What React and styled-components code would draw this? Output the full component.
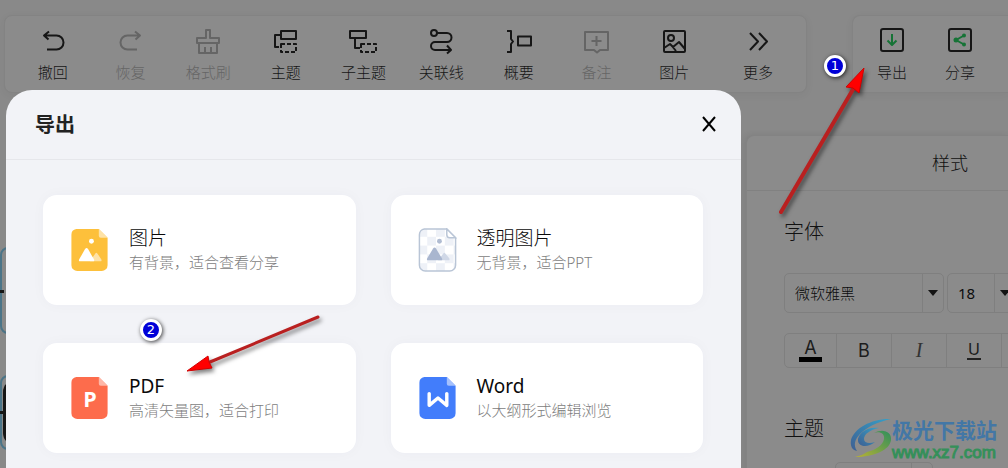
import React, { useState } from "react";
import styled, { createGlobalStyle } from "styled-components";

const GlobalStyle = createGlobalStyle`
  * {
    box-sizing: border-box;
  }

  body {
    margin: 0;
    background: #898989;
    font-family: "Noto Sans", "Noto Sans CJK SC", sans-serif;
  }

  button,
  select {
    font-family: inherit;
  }
`;

const Page = styled.div`
  position: relative;
  height: 100vh;
  overflow: hidden;
  color: #111;
`;

const TopBar = styled.header`
  display: flex;
  gap: 45px;
  padding: 15px 0 0 4px;
`;

const Toolbar = styled.nav`
  flex: 1;
  display: grid;
  grid-template-columns: repeat(9, 1fr) 90px;
  height: 78px;
  padding: 0 3px 0 9px;
  background: #8b8b8b;
  border: 1px solid #838383;
  border-radius: 8px;
  box-shadow: 0 2px 10px rgba(0, 0, 0, 0.04);
`;

const ActionBar = styled.nav`
  display: grid;
  grid-template-columns: 68px 68px;
  width: 156px;
  height: 78px;
  padding-left: 5px;
  background: #8b8b8b;
  border: 1px solid #838383;
  border-right: none;
  border-radius: 8px 0 0 8px;
  box-shadow: 0 2px 10px rgba(0, 0, 0, 0.04);
`;

const ToolButton = styled.button`
  display: flex;
  flex-direction: column;
  align-items: center;
  gap: 6px;
  padding: 11px 0 0;
  background: none;
  border: none;
  color: #161616;
  cursor: pointer;

  &:disabled {
    color: #656565;
    cursor: default;
  }
`;

const ToolLabel = styled.span`
  font-size: 15px;
  font-weight: 300;
  line-height: 22px;
  white-space: nowrap;
`;

const Icon = styled.svg`
  display: block;
  width: 28px;
  height: 28px;
  fill: none;
  stroke: currentColor;
  stroke-width: 2;
  stroke-linejoin: round;
`;

const StylePanel = styled.aside`
  width: 262px;
  margin: 42px 0 0 auto;
  background: #8b8b8b;
  border: 1px solid #838383;
  border-right: none;
  border-radius: 8px 0 0 0;
  box-shadow: -2px 0 6px rgba(0, 0, 0, 0.08);
`;

const PanelHeader = styled.div`
  height: 55px;
  padding-left: 185px;
  border-bottom: 1px solid #818181;
  font-size: 18px;
  font-weight: 300;
  line-height: 54px;
`;

const PanelBody = styled.div`
  padding: 28px 0 0 37px;
`;

const SectionTitle = styled.h3`
  margin: 0;
  font-size: 20px;
  font-weight: 300;
  line-height: 26px;
`;

const FieldRow = styled.div`
  display: flex;
  gap: 3px;
  margin-top: 28px;
`;

const SelectBox = styled.label`
  position: relative;
  flex: 0 0 ${(props) => props.$width};
  height: 40px;
  border: 1px solid #7f7f7f;
  border-radius: 5px;

  &::before {
    content: "";
    position: absolute;
    top: 0;
    bottom: 0;
    right: 20px;
    border-left: 1px solid #7f7f7f;
  }

  &::after {
    content: "";
    position: absolute;
    top: 16px;
    right: 5px;
    border: 5px solid transparent;
    border-top: 6px solid #141414;
    border-bottom: none;
  }
`;

const Select = styled.select`
  width: 100%;
  height: 100%;
  padding: 0 22px 0 10px;
  appearance: none;
  background: none;
  border: none;
  color: #0c0c0c;
  font-size: 15px;
  font-weight: ${(props) => props.$weight || 300};
`;

const FormatGroup = styled.div`
  display: grid;
  grid-template-columns: 52px repeat(4, 55px);
  width: 272px;
  height: 35px;
  margin: 20px 0 48px;
  border: 1px solid #7f7f7f;
  border-radius: 5px;
`;

const FormatButton = styled.button`
  display: flex;
  align-items: center;
  justify-content: center;
  padding: 0;
  background: none;
  border: none;
  border-right: 1px solid #7f7f7f;
  color: #1c1c1c;
  font-family: "Inter", sans-serif;
  font-size: 18px;
  font-weight: 400;
`;

const ItalicButton = styled(FormatButton)`
  color: #333;
  font-family: "Liberation Serif", serif;
  font-size: 20px;
  font-style: italic;
`;

const ColorLetter = styled.span`
  width: 23px;
  border-bottom: 5px solid #000;
  font-size: 18px;
  line-height: 18px;
`;

const UnderlineLetter = styled.span`
  width: 14px;
  border-bottom: 2px solid #222;
  font-size: 16px;
  line-height: 17px;
`;

const ThemeRow = styled.div`
  display: flex;
  margin: 20px 0 0 51px;
`;

const MapNode = styled.div`
  position: absolute;
  top: ${(props) => props.$top};
  left: 0;
  width: 60px;
  height: ${(props) => props.$height};
  padding: 3px 0 3px 1px;
  border: 2px solid #4b7488;
  border-radius: 8px;
`;

const NodeBody = styled.div`
  height: 100%;
  background: #161616;
  border-radius: 12px;
`;

const Connector = styled.div`
  position: absolute;
  top: ${(props) => props.$top};
  left: 0;
  width: 4px;
  height: 3px;
  background: #161616;
`;

const Dialog = styled.section`
  position: absolute;
  top: 90px;
  bottom: -40px;
  left: 6px;
  right: 267px;
  background: #f2f3f7;
  border-radius: 26px 26px 0 0;
`;

const DialogHeader = styled.div`
  display: flex;
  align-items: center;
  justify-content: space-between;
  height: 70px;
  padding: 0 24px 0 29px;
  border-bottom: 1px solid #e6e7eb;
`;

const DialogTitle = styled.h2`
  margin: 0;
  font-size: 20px;
  font-weight: 700;
  line-height: 28px;
  color: #222;
`;

const CloseButton = styled.button`
  padding: 0;
  background: none;
  border: none;
  color: #000;
  cursor: pointer;

  svg {
    display: block;
  }
`;

const CardGrid = styled.div`
  display: grid;
  grid-template-columns: 1fr 1fr;
  gap: 38px 35px;
  padding: 35px 38px 38px 37px;
`;

const Card = styled.button`
  display: flex;
  align-items: center;
  gap: 20px;
  height: 110px;
  padding: 0 27px;
  background: #fff;
  border: none;
  border-radius: 14px;
  box-shadow: 0 0 14px rgba(40, 50, 80, 0.03);
  text-align: left;
  cursor: pointer;
`;

const FileIcon = styled.svg`
  flex: none;
  width: 39px;
  height: 44px;
`;

const CardText = styled.span`
  display: flex;
  flex-direction: column;
  padding-bottom: 3px;
`;

const CardTitle = styled.span`
  font-size: 19px;
  font-weight: ${(props) => (props.$latin ? 400 : 300)};
  line-height: 26px;
  color: #0a0a0a;
`;

const CardDesc = styled.span`
  font-size: 15px;
  font-weight: 300;
  line-height: 22px;
  color: #7d7d7d;
`;

const StepBadge = styled.span`
  position: absolute;
  top: ${(props) => props.$top};
  left: ${(props) => props.$left};
  width: 22px;
  height: 22px;
  border: 3px solid #fff;
  border-radius: 50%;
  background: #0000d8;
  box-shadow: 1px 1px 4px rgba(0, 0, 0, 0.75);
  color: #fff;
  font-family: "DejaVu Sans", sans-serif;
  font-size: 13px;
  line-height: 16px;
  text-align: center;
`;

const Arrow = styled.svg`
  position: absolute;
  top: ${(props) => props.$top};
  left: ${(props) => props.$left};
  filter: drop-shadow(2px 3px 2px rgba(0, 0, 0, 0.5));
  pointer-events: none;
`;

const Watermark = styled.div`
  position: absolute;
  right: 11px;
  bottom: 6px;
  display: flex;
  align-items: center;
`;

const WatermarkName = styled.div`
  color: #4377a6;
  font-family: "Noto Sans CJK SC", sans-serif;
  font-size: 21px;
  font-weight: 700;
  line-height: 30px;
`;

const WatermarkSite = styled.div`
  color: #35905a;
  font-family: "Liberation Sans", sans-serif;
  font-size: 17px;
  -webkit-text-stroke: 1px #35905a;
  line-height: 18px;
`;

const tools = [
  {
    label: "撤回",
    icon: <path d="M10 4.500 5 8.500l4.500 4M5.500 8.500H17.500a7 7 0 0 1 0 14H8" />,
  },
  {
    label: "恢复",
    disabled: true,
    icon: <path d="M19 4.500l5 4-4.500 4M23.500 8.500H11.500a7 7 0 0 0 0 14H21" />,
  },
  {
    label: "格式刷",
    disabled: true,
    icon: (
      <path d="M12 3h4v8h9v5H3v-5h9zM5 16v10h18V16M11 20v5M17 20v5" />
    ),
  },
  {
    label: "主题",
    icon: (
      <>
        <path d="M9 4h15v8H9zM8 8H3v12h4" />
        <path d="M9 17h15v8H9z" strokeDasharray="4 2" />
      </>
    ),
  },
  {
    label: "子主题",
    icon: (
      <>
        <path d="M1 4h16v7H1zM6 11v10h5" />
        <path d="M12 17h15v8H12z" strokeDasharray="4 2" />
      </>
    ),
  },
  {
    label: "关联线",
    icon: (
      <>
        <circle cx="7" cy="6" r="3" />
        <path d="M10 6h10a4.500 4.500 0 0 1 0 9H8a4 4 0 0 0 0 8h15M20 18.500l4 4.500-4 3.500" />
      </>
    ),
  },
  {
    label: "概要",
    icon: (
      <path d="M2 4h4v8l2 2.500L6 17v8H2M13 9.500h13v9H13z" />
    ),
  },
  {
    label: "备注",
    disabled: true,
    icon: <path d="M3 5h23v18h-8l-3 2.500L12 23H3zM14.500 9v10M9.500 14h10" />,
  },
  {
    label: "图片",
    icon: (
      <>
        <rect x="4" y="4" width="21" height="21" rx="1" />
        <circle cx="11" cy="11" r="3" />
        <path d="M4 21l6-4 3 3 6-5 6 7M12 19l4 5" />
      </>
    ),
  },
  {
    label: "更多",
    icon: <path d="M6 6l8 8.500L6 23M15 6l8 8.500-8 8.500" />,
  },
];

const actions = [
  {
    label: "导出",
    icon: (
      <>
        <rect x="3" y="2" width="22" height="22" rx="2" />
        <path d="M14 7v11M9.500 13.500l4.500 4.500 4.500-4.500" stroke="#167336" />
      </>
    ),
  },
  {
    label: "分享",
    icon: (
      <>
        <rect x="3" y="2" width="22" height="22" rx="2" />
        <path d="M18 8.500 10 13l8 4.500" stroke="#167336" />
        <g fill="#167336" stroke="none">
          <circle cx="18" cy="8.500" r="2" />
          <circle cx="10" cy="13" r="2.500" />
          <circle cx="18" cy="17.500" r="2" />
        </g>
      </>
    ),
  },
];

const filePath =
  "M6 1H29L38 10V38a6 6 0 0 1-6 6H7a6 6 0 0 1-6-6V7a6 6 0 0 1 5-6z";

const FileShape = ({ color, fold, children }) => (
  <FileIcon viewBox="0 0 39 45" aria-hidden="true">
    <path d={filePath} fill={color} />
    <path d="M29 1l9 9h-7a2 2 0 0 1-2-2z" fill={fold} />
    {children}
  </FileIcon>
);

const formats = [
  {
    title: "图片",
    desc: "有背景，适合查看分享",
    icon: (
      <FileShape color="#fdc03b" fold="#fee2a6">
        <circle cx="21.500" cy="13.500" r="2.500" fill="#fff" />
        <path
          d="M20 34l5.500-8q1-1.500 2 0l4 6q1 2-1 2z"
          fill="#fee2a6"
        />
        <path d="M10 34q-2 0-1-2l6-10.500q1.500-2 3 0l6 10.500q1 2-1 2z" fill="#fff" />
      </FileShape>
    ),
  },
  {
    title: "透明图片",
    desc: "无背景，适合PPT",
    icon: (
      <FileIcon viewBox="0 0 39 45" aria-hidden="true">
        <defs>
          <pattern id="checker" width="18" height="18" patternUnits="userSpaceOnUse">
            <rect width="18" height="18" fill="#fff" />
            <path d="M0 0h9v9H0zM9 9h9v9H9z" fill="#eef1f7" />
          </pattern>
        </defs>
        <path d={filePath} fill="url(#checker)" stroke="#b9c5d6" strokeWidth="1.500" />
        <path d="M29 1v6q0 3 3 3h6z" fill="#fff" stroke="#b9c5d6" strokeWidth="1.500" />
        <circle cx="21.500" cy="13.500" r="2.500" fill="#b0bcd2" />
        <path d="M20 33l5.500-7q1-1.500 2 0l4 5q1 2-1 2z" fill="#cfd7e6" />
        <path d="M10 33q-2 0-1-2l6-10q1.500-2 3 0l6 10q1 2-1 2z" fill="#a9b6cf" />
      </FileIcon>
    ),
  },
  {
    title: "PDF",
    latin: true,
    desc: "高清矢量图，适合打印",
    icon: (
      <FileShape color="#fd6c4c" fold="#feb7a7">
        <text
          x="20"
          y="32"
          fill="#fff"
          fontFamily="Open Sans, sans-serif"
          fontSize="22"
          fontWeight="700"
          textAnchor="middle"
        >
          P
        </text>
      </FileShape>
    ),
  },
  {
    title: "Word",
    latin: true,
    desc: "以大纲形式编辑浏览",
    icon: (
      <FileShape color="#427dfb" fold="#a5c1fd">
        <path
          d="M11 18v12l9-7.500 9 7.500V18"
          fill="none"
          stroke="#fff"
          strokeWidth="3.500"
          strokeLinecap="round"
          strokeLinejoin="round"
        />
      </FileShape>
    ),
  },
];

const ToolItem = ({ label, icon, disabled, onClick }) => (
  <ToolButton type="button" disabled={disabled} onClick={onClick}>
    <Icon viewBox="0 0 28 28" aria-hidden="true">
      {icon}
    </Icon>
    <ToolLabel>{label}</ToolLabel>
  </ToolButton>
);

const ExportDialog = ({ onClose }) => (
  <Dialog role="dialog" aria-labelledby="export-title">
    <DialogHeader>
      <DialogTitle id="export-title">导出</DialogTitle>
      <CloseButton type="button" aria-label="关闭" onClick={onClose}>
        <svg width="16" height="18" viewBox="0 0 16 18">
          <path d="M2 1l12 14M14 1L2 15" stroke="currentColor" strokeWidth="2" />
        </svg>
      </CloseButton>
    </DialogHeader>
    <CardGrid>
      {formats.map((format) => (
        <Card type="button" key={format.title}>
          {format.icon}
          <CardText>
            <CardTitle $latin={format.latin}>{format.title}</CardTitle>
            <CardDesc>{format.desc}</CardDesc>
          </CardText>
        </Card>
      ))}
    </CardGrid>
  </Dialog>
);

const App = () => {
  const [open, setOpen] = useState(true);
  const [font, setFont] = useState("微软雅黑");
  const [size, setSize] = useState("18");

  return (
    <Page>
      <GlobalStyle />
      <TopBar>
        <Toolbar>
          {tools.map((tool) => (
            <ToolItem key={tool.label} {...tool} />
          ))}
        </Toolbar>
        <ActionBar>
          {actions.map((action) => (
            <ToolItem
              key={action.label}
              {...action}
              onClick={() => action.label === "导出" && setOpen(true)}
            />
          ))}
        </ActionBar>
      </TopBar>

      <MapNode $top="247px" $height="87px" />
      <Connector $top="290px" />
      <MapNode $top="375px" $height="75px">
        <NodeBody />
      </MapNode>
      <Connector $top="411px" />

      <StylePanel>
        <PanelHeader>样式</PanelHeader>
        <PanelBody>
          <SectionTitle>字体</SectionTitle>
          <FieldRow>
            <SelectBox $width="160px">
              <Select
                aria-label="字体"
                value={font}
                onChange={(e) => setFont(e.target.value)}
              >
                <option>微软雅黑</option>
                <option>宋体</option>
              </Select>
            </SelectBox>
            <SelectBox $width="69px">
              <Select
                aria-label="字号"
                $weight={400}
                value={size}
                onChange={(e) => setSize(e.target.value)}
              >
                <option>18</option>
                <option>20</option>
              </Select>
            </SelectBox>
          </FieldRow>
          <FormatGroup>
            <FormatButton type="button" aria-label="文字颜色">
              <ColorLetter>A</ColorLetter>
            </FormatButton>
            <FormatButton type="button">B</FormatButton>
            <ItalicButton type="button">I</ItalicButton>
            <FormatButton type="button">
              <UnderlineLetter>U</UnderlineLetter>
            </FormatButton>
            <FormatButton type="button" aria-label="删除线" />
          </FormatGroup>
          <SectionTitle>主题</SectionTitle>
          <ThemeRow>
            <SelectBox $width="98px">
              <Select aria-label="主题" />
            </SelectBox>
          </ThemeRow>
        </PanelBody>
      </StylePanel>

      {open && <ExportDialog onClose={() => setOpen(false)} />}

      <StepBadge $top="55px" $left="824px">1</StepBadge>
      <Arrow $top="60px" $left="775px" width="95" height="160">
        <path d="M6 152L80 26" stroke="#b92020" strokeWidth="4" strokeLinecap="round" />
        <path d="M89 8L71 27l7 1 6 5z" fill="#f00" stroke="#d00000" />
      </Arrow>
      <StepBadge $top="319px" $left="140px">2</StepBadge>
      <Arrow $top="310px" $left="180px" width="145" height="70">
        <path d="M138 7L30 52" stroke="#b92020" strokeWidth="3" strokeLinecap="round" />
        <path d="M7 61L28 46l1 6 3 6z" fill="#f00" stroke="#d00000" />
      </Arrow>

      <Watermark>
        <svg width="43" height="40" viewBox="0 0 43 40" aria-hidden="true">
          <defs>
            <linearGradient id="swirlBlue" x1="0" y1="1" x2="1" y2="0">
              <stop offset="0" stopColor="#3e5f92" />
              <stop offset="1" stopColor="#36a0c8" />
            </linearGradient>
            <linearGradient id="swirlGreen" x1="0" y1="1" x2="1" y2="0">
              <stop offset="0" stopColor="#b9b234" />
              <stop offset="1" stopColor="#2f8f5c" />
            </linearGradient>
          </defs>
          <path
            d="M42 1C24 0 5 10 2 22c-1 6 1 10 6 11-4-6-2-12 3-17C18 9 28 4 42 1z"
            fill="url(#swirlBlue)"
          />
          <path
            d="M30 10C17 8 8 17 9 23c1 6 10 7 17 1-6 2-11 1-11-3 0-5 6-9 15-11z"
            fill="url(#swirlBlue)"
          />
          <path
            d="M25 15c9-5 18-1 17 7-1 10-17 17-36 17 5-1 9-3 12-5 9-2 16-7 17-13 1-5-4-8-10-6z"
            fill="url(#swirlGreen)"
          />
        </svg>
        <div>
          <WatermarkName>极光下载站</WatermarkName>
          <WatermarkSite>www.xz7.com</WatermarkSite>
        </div>
      </Watermark>
    </Page>
  );
};

export default App;
